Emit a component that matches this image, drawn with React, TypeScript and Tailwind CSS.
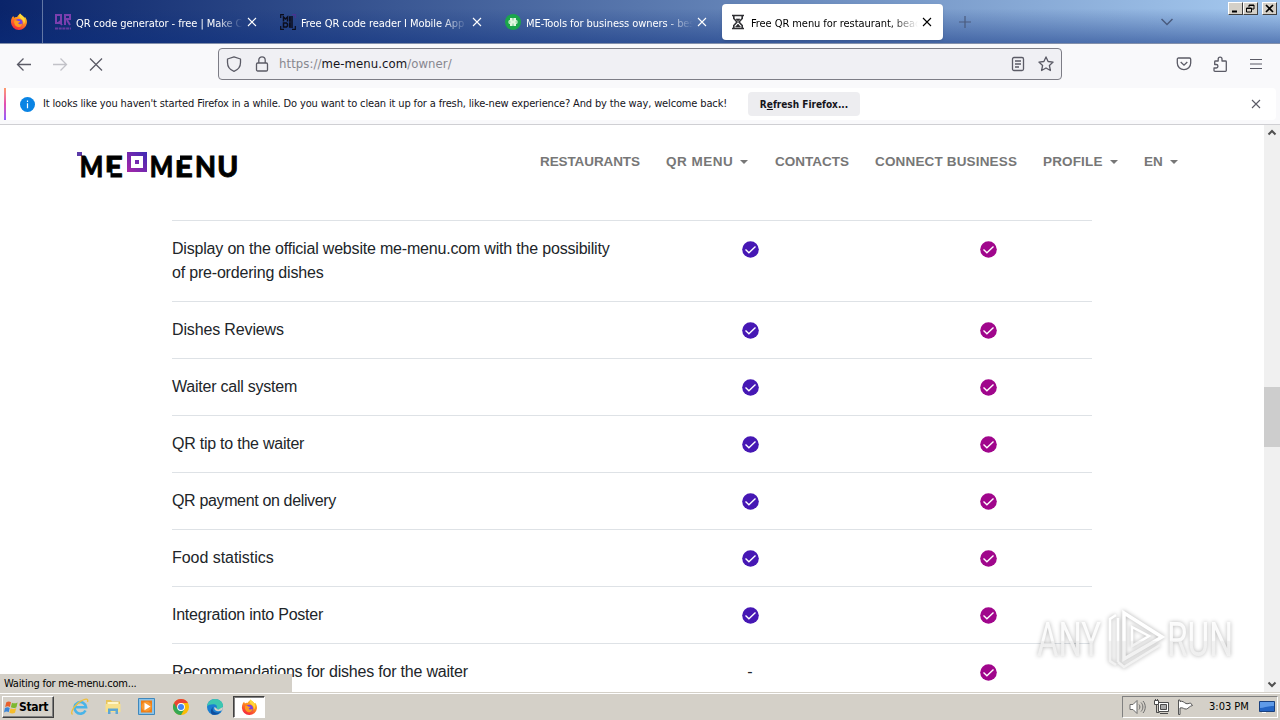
import type { ReactNode } from "react";
import clsx from "clsx";

const tahoma = "font-['DejaVu_Sans_Condensed','DejaVu_Sans',sans-serif] [font-stretch:condensed]";

function FirefoxIcon({ size = 18 }: { size?: number }) {
  return (
    <svg width={size} height={size} viewBox="0 0 18 18">
      <defs>
        <linearGradient id="fx" x1="0.8" y1="0" x2="0.3" y2="1">
          <stop offset="0" stopColor="#ffe226" />
          <stop offset="0.45" stopColor="#ff8a1e" />
          <stop offset="1" stopColor="#f5213f" />
        </linearGradient>
      </defs>
      <path d="M2 4.500 3.200 3l1 1.700C5 4 6.200 3.900 7 4.200 7.600 2.700 9 2 10 .5c1 1.300 3.300 2.400 4.200 4.200l.8-.6c1.400 1.700 2.200 3.600 1.900 6A8 8 0 0 1 1 9.500C.9 7.500 1.200 6 2 4.500Z" fill="url(#fx)" />
      <circle cx="8.800" cy="9.800" r="3.800" fill="#7542e5" />
      <path d="M4.300 7.500c1.600-.7 2.900-.3 3.900.6l2 .1c-.3 1.200-1.700 1.200-2 2 .6 1.400 2.800 1.300 4 .2-.2 2.500-2 3.700-4 3.600-2.900-.2-4.600-3.500-3.900-6.500Z" fill="#ff9a1f" />
      <path d="M10 .5c1 1.300 3.300 2.400 4.200 4.200 1.300 2.600.8 4.900-.6 6.800.3-3.700-1-5-3-6C9.200 4.500 9 2.500 10 .5Z" fill="#ffd83a" />
    </svg>
  );
}

function QrFavicon() {
  return (
    <svg width="16" height="16" viewBox="0 0 16 16" fill="none" stroke="#7b3fae" strokeWidth="2">
      <path d="M1 1h5v8H1zM4 7l3 4M10 11V1h5v4h-5M12 6l3 5" />
      <path d="M0 14.500h16" strokeDasharray="3 .7" strokeOpacity=".8" />
    </svg>
  );
}

function ScanFavicon() {
  return (
    <svg width="16" height="16" viewBox="0 0 16 16" fill="none" stroke="#0b0d1c" strokeWidth="1.200">
      <path d="M.7 4V.7H4M.7 12v3.300H4M12 15.300h3.300V12" />
      <path d="M12 .7h3.300V4" stroke="#4b3291" />
      <path d="M3.500 7.500V3l2 2 2-2v4.500M13 3H9.700v4H13M9.700 5H13M3.500 9h3l1 1v2l-1 1h-3zM13 9H9.700v4H13M9.700 11H13" strokeWidth="1.500" />
    </svg>
  );
}

function CloverFavicon() {
  return (
    <svg width="16" height="16" viewBox="0 0 16 16">
      <circle cx="8" cy="8" r="8" fill="#1aa64b" />
      <path d="M5 4h2.300l.7 1 .7-1H11v2l1.500.7v2.600L11 10v2H8.700L8 11l-.7 1H5v-2l-1.500-.7V6.700L5 6z" fill="#e2f7df" />
      <path d="M8 5v1.500M8 9.500V11M4 8h1.500M10.500 8H12" stroke="#5dbb77" strokeWidth=".8" />
    </svg>
  );
}

function HourglassFavicon() {
  return (
    <svg width="16" height="16" viewBox="0 0 16 16" fill="none" stroke="#2f2f33" strokeWidth="1.600">
      <path d="M2 1.500h12M2 14.500h12M3.800 2v2.500L7 8l-3.200 3.500V14M12.200 2v2.500L9 8l3.200 3.500V14" />
      <path d="M6 5h4L8 7zM5.500 13 8 10l2.500 3z" fill="#2f2f33" strokeWidth=".6" />
    </svg>
  );
}

function Cross({ size, className }: { size: number; className?: string }) {
  return (
    <svg width={size} height={size} viewBox="0 0 10 10" className={className} fill="none" stroke="currentColor" strokeWidth="1.100">
      <path d="m1 1 8 8M9 1 1 9" />
    </svg>
  );
}

const tabs = [
  { title: "QR code generator - free | Make C", icon: <QrFavicon /> },
  { title: "Free QR code reader I Mobile App", icon: <ScanFavicon /> },
  { title: "ME-Tools for business owners - bes", icon: <CloverFavicon /> },
  { title: "Free QR menu for restaurant, beac", icon: <HourglassFavicon />, active: true },
];

function WindowButton({ children }: { children: ReactNode }) {
  return (
    <div className="flex h-[13px] w-[15px] items-center justify-center border border-t-white border-r-[#404040] border-b-[#404040] border-l-white bg-[#d4d0c8] text-black">
      {children}
    </div>
  );
}

function TabBar() {
  return (
    <div className="flex h-[43px] shrink-0 bg-[linear-gradient(to_bottom,transparent_20%,rgba(10,45,125,0.5)),linear-gradient(to_right,#0a246a,#a6caf0)]">
      <div className="flex w-[43px] items-center justify-center border-r border-[#6277a5] pr-1">
        <FirefoxIcon />
      </div>
      <div className="ml-1 flex gap-1 pt-1">
        {tabs.map((tab) => (
          <div
            key={tab.title}
            className={clsx(
              "flex h-9 w-[221px] items-center rounded pl-2",
              tab.active ? "bg-white text-black shadow" : "text-white"
            )}
          >
            {tab.icon}
            <div className={clsx(tahoma, "ml-[5px] w-[167px] overflow-hidden whitespace-nowrap pt-[3px] text-[11px] leading-4 tracking-[-0.07px] [mask-image:linear-gradient(to_right,#000_84%,transparent)]")}>
              {tab.title}
            </div>
            <Cross size={10} className="ml-1" />
          </div>
        ))}
      </div>
      <svg width="12" height="12" viewBox="0 0 12 12" className="mt-4 ml-4 text-[#4a5b7e]" stroke="currentColor" strokeWidth="1.200">
        <path d="M6 0v12M0 6h12" />
      </svg>
      <svg width="12" height="8" viewBox="0 0 12 8" className="mt-[18px] ml-auto" fill="none" stroke="#4a5b7e" strokeWidth="1.500">
        <path d="m.5 1 5.500 5.500L11.500 1" />
      </svg>
      <div className="mt-[2px] mr-[3px] ml-[55px] flex">
        <WindowButton>
          <svg width="9" height="9" viewBox="0 0 9 9"><path d="M1 6.500h5v2H1z" /></svg>
        </WindowButton>
        <WindowButton>
          <svg width="9" height="9" viewBox="0 0 9 9" fill="none" stroke="#000"><path d="M3 3V1h5v4H6M3 1.500h5M.5 4h5v4h-5zM.5 4.500h5" /></svg>
        </WindowButton>
        <div className="ml-1">
          <WindowButton>
            <svg width="9" height="9" viewBox="0 0 9 9" stroke="#000" strokeWidth="1.700"><path d="m1 1 7 7M8 1 1 8" /></svg>
          </WindowButton>
        </div>
      </div>
    </div>
  );
}

function Toolbar() {
  return (
    <div className="flex h-[45px] shrink-0 items-center border-t border-[#8390ab] bg-[#f9f9fb] pb-1 text-[#5b5b66]">
      <svg width="16" height="16" viewBox="0 0 16 16" className="ml-4" fill="none" stroke="currentColor" strokeWidth="1.300">
        <path d="M15 8.500H1.500M7.500 2.500l-6 6 6 6" />
      </svg>
      <svg width="16" height="16" viewBox="0 0 16 16" className="ml-5" fill="none" stroke="#c2c2c8" strokeWidth="1.300">
        <path d="M1 8.500h13.500M8.500 2.500l6 6-6 6" />
      </svg>
      <svg width="14" height="14" viewBox="0 0 14 14" className="ml-[21px]" stroke="currentColor" strokeWidth="1.300">
        <path d="m1 1.500 12 12M13 1.500l-12 12" />
      </svg>
      <div className="ml-[115px] flex h-8 w-[844px] items-center rounded border border-[#7d7d86] bg-[#f0f0f4]">
        <svg width="16" height="16" viewBox="0 0 16 16" className="ml-[7px]" fill="none" stroke="currentColor" strokeWidth="1.300">
          <path d="M8 .8 14.500 3v3.500c0 4-2.500 7.300-6.500 8.800-4-1.500-6.500-4.800-6.500-8.800V3z" strokeLinejoin="round" />
        </svg>
        <svg width="16" height="16" viewBox="0 0 16 16" className="ml-3" fill="none" stroke="currentColor" strokeWidth="1.300">
          <rect x="2.500" y="7" width="11" height="8" rx="1.200" />
          <path d="M4.800 7V4a3.200 3.200 0 0 1 6.400 0v3" />
        </svg>
        <div className={clsx(tahoma, "ml-[9px] text-[13px] leading-4 tracking-[0.07px] text-[#87878f]")}>
          https://<span className="text-[#15141a]">me-menu.com</span>/owner/
        </div>
        <svg width="14" height="16" viewBox="0 0 14 16" className="ml-auto" fill="none" stroke="currentColor" strokeWidth="1.300">
          <rect x="1.500" y="1.500" width="11" height="13" rx="1.500" />
          <path d="M4 5h6M4 8h6M4 11h4" />
        </svg>
        <svg width="16" height="16" viewBox="0 0 16 16" className="mr-[7px] ml-[13px]" fill="none" stroke="currentColor" strokeWidth="1.300" strokeLinejoin="round">
          <path d="m8 .9 2.100 4.600 5 .6-3.700 3.400 1 5L8 12l-4.400 2.500 1-5L.9 6.100l5-.6z" />
        </svg>
      </div>
      <svg width="16" height="16" viewBox="0 0 16 16" className="ml-[114px]" fill="none" stroke="currentColor" strokeWidth="1.300">
        <path d="M2.500 2h11c.7 0 1.200.5 1.200 1.200V7a6.700 6.700 0 0 1-13.400 0V3.200C1.300 2.500 1.800 2 2.500 2Z" />
        <path d="m4.700 6 3.300 3.200L11.300 6" />
      </svg>
      <svg width="16" height="16" viewBox="0 0 16 16" className="ml-5" fill="none" stroke="currentColor" strokeWidth="1.300" strokeLinejoin="round">
        <path d="M3 15.300h10.500c.5 0 .8-.3.800-.8V5.800c0-.5-.3-.8-.8-.8H10V3a1.900 1.900 0 0 0-3.800 0v2H3.500c-.5 0-.8.3-.8.8v2.700h1.500a1.500 1.500 0 0 1 0 3.500H2v2.500c0 .5.500.8 1 .8Z" />
      </svg>
      <svg width="14" height="12" viewBox="0 0 14 12" className="ml-[21px]" stroke="currentColor" strokeWidth="1.200">
        <path d="M1 1.500h12M1 6h12M1 10.500h12" />
      </svg>
    </div>
  );
}

function Notification() {
  return (
    <div className="flex h-[37px] shrink-0 border-b border-[#cfcfd3] bg-[#f9f9fb] pb-1">
      <div className="ml-1 w-[2px] bg-gradient-to-b from-[#ff9a6a] via-[#e34bb0] to-[#9059ff]" />
      <div className="mr-[4px] flex flex-1 items-center rounded-r bg-white">
        <svg width="15" height="15" viewBox="0 0 15 15" className="ml-[14px]">
          <circle cx="7.500" cy="7.500" r="7.500" fill="#0a84e4" />
          <path d="M7.500 6.300v5M7.500 3.500V5" stroke="#fff" strokeWidth="1.200" />
        </svg>
        <div className={clsx(tahoma, "ml-2 w-[705px] whitespace-nowrap text-[11px] leading-4 tracking-[-0.145px] text-[#15141a]")}>
          It looks like you haven't started Firefox in a while. Do you want to clean it up for a fresh, like-new experience? And by the way, welcome back!
        </div>
        <button className={clsx(tahoma, "h-6 w-28 whitespace-nowrap rounded bg-[#ededf0] text-[10px] font-bold text-[#15141a]")}>
          R<span className="underline">e</span>fresh Firefox...
        </button>
        <Cross size={10} className="mr-[15px] ml-auto text-[#5b5b66]" />
      </div>
    </div>
  );
}

const logoLetters = [
  { char: "M", x: 2.700, width: 23.5 },
  { char: "E", x: 27.700, width: 18 },
  { char: "M", x: 72.700, width: 23.5 },
  { char: "E", x: 97.700, width: 18 },
  { char: "N", x: 118, width: 21 },
  { char: "U", x: 140.300, width: 21 },
];

function Logo() {
  return (
    <svg width="164" height="30" viewBox="0 0 164 30" className="font-['Lato',sans-serif] font-black">
      <defs>
        <linearGradient id="brand" x1="1" y1="0" x2="0" y2="1">
          <stop offset="0" stopColor="#3d2bb5" />
          <stop offset="1" stopColor="#a826a8" />
        </linearGradient>
      </defs>
      <path d="M0 2h5v4H0z" fill="#5b3ba8" />
      <g stroke="#000" strokeWidth="0.8" fontSize="28">
        {logoLetters.map((l) => (
          <text key={l.x} x={l.x} y="26.500" textLength={l.width} lengthAdjust="spacingAndGlyphs">
            {l.char}
          </text>
        ))}
      </g>
      <path d="M28 22.500h5.500V28H28zM98 5h5v5h-5z" fill="#fff" />
      <path d="M50 2h20v20H50zM54 6v12h12V6zM58 10h4v4h-4z" fill="url(#brand)" fillRule="evenodd" />
    </svg>
  );
}

const nav = [
  { label: "Restaurants", className: "w-[126px] tracking-[-0.1px]" },
  { label: "QR menu", className: "w-[109px] tracking-[0.48px]", menu: true },
  { label: "Contacts", className: "w-[100px]" },
  { label: "Connect business", className: "w-[168px] tracking-[0.16px]" },
  { label: "Profile", className: "w-[101px] tracking-[0.15px]", menu: true },
  { label: "EN", className: "w-[40px]", menu: true },
];

function SiteHeader() {
  return (
    <header className="flex h-[75px] pt-[25px]">
      <div className="ml-[77px] w-[463px]">
        <Logo />
      </div>
      <nav className="flex text-[13.5px] leading-6 font-bold text-[#777] uppercase">
        {nav.map((item) => (
          <div key={item.label} className={clsx("flex items-center self-start whitespace-nowrap", item.className)}>
            {item.label}
            {item.menu && (
              <svg width="8" height="4" viewBox="0 0 8 4" className="ml-[7px]">
                <path d="M0 0h8L4 4z" fill="#777" />
              </svg>
            )}
          </div>
        ))}
      </nav>
    </header>
  );
}

const features = [
  { name: "Display on the official website me-menu.com with the possibility of pre-ordering dishes", basic: true, tracking: "tracking-[-0.19px]" },
  { name: "Dishes Reviews", basic: true, tracking: "tracking-[-0.14px]" },
  { name: "Waiter call system", basic: true, tracking: "tracking-[-0.23px]" },
  { name: "QR tip to the waiter", basic: true, tracking: "tracking-[-0.24px]" },
  { name: "QR payment on delivery", basic: true, tracking: "tracking-[-0.35px]" },
  { name: "Food statistics", basic: true, tracking: "tracking-[-0.04px]" },
  { name: "Integration into Poster", basic: true, tracking: "tracking-[-0.24px]" },
  { name: "Recommendations for dishes for the waiter", basic: false, tracking: "tracking-[-0.2px]" },
];

function Check({ className }: { className: string }) {
  return (
    <svg width="17" height="17" viewBox="0 0 17 17" className={clsx("mt-1", className)}>
      <circle cx="8.500" cy="8.500" r="8.300" fill="currentColor" />
      <path d="m3.500 8.500 3.400 3.200 6.600-6.200" fill="none" stroke="#fff" strokeWidth="1.400" />
    </svg>
  );
}

function FeatureTable() {
  return (
    <div className="mt-[20px] ml-[172px] w-[920px]">
      {features.map((f) => (
        <div key={f.name} className="grid grid-cols-[459px_238px_1fr] border-t border-[#dee2e6] py-4 leading-6 text-[#212529]">
          <div className={clsx("pr-4 text-base", f.tracking)}>{f.name}</div>
          <div className="flex justify-center">{f.basic ? <Check className="text-[#4617b4]" /> : "-"}</div>
          <div className="flex justify-center pl-[15px]">
            <Check className="text-[#a0068c]" />
          </div>
        </div>
      ))}
    </div>
  );
}

function Scrollbar() {
  return (
    <div className="flex w-4 flex-col items-center bg-[#f0f0f0] py-1 text-[#505050]">
      <svg width="10" height="7" viewBox="0 0 10 7" fill="none" stroke="currentColor" strokeWidth="2"><path d="m1.500 5.500 3.500-3.500 3.500 3.500" /></svg>
      <div className="mt-[251px] h-[60px] w-full bg-[#cdcdcd]" />
      <svg width="10" height="7" viewBox="0 0 10 7" className="mt-auto" fill="none" stroke="currentColor" strokeWidth="2"><path d="m1.500 1.500 3.500 3.500 3.500-3.500" /></svg>
    </div>
  );
}

function Watermark() {
  return (
    <svg width="200" height="66" viewBox="0 0 200 66" className="absolute right-[44px] bottom-[20px] font-['Roboto',sans-serif] [filter:drop-shadow(0_0_2px_rgba(0,0,0,0.32))]">
      <defs>
        <linearGradient id="glass" gradientUnits="userSpaceOnUse" x1="0" y1="0" x2="0" y2="66">
          <stop offset="0.52" stopColor="#fff" />
          <stop offset="0.54" stopColor="#f2f2f2" />
        </linearGradient>
      </defs>
      <g fill="url(#glass)" fillOpacity="0.9" fontSize="48">
        <text x="1" y="50" textLength="64" lengthAdjust="spacingAndGlyphs">ANY</text>
        <text x="131" y="50" textLength="66" lengthAdjust="spacingAndGlyphs">RUN</text>
      </g>
      <g fill="none" stroke="url(#glass)" strokeWidth="3.500">
        <path d="M88 7v46l38-22z" />
        <path d="M80 9l-6 4v42l6 4M82 12v44" strokeWidth="2.500" />
        <path d="M96 21v19l17-10z" strokeWidth="2.500" />
        <path d="M82 56l6 5 36-22" strokeWidth="2.500" />
      </g>
    </svg>
  );
}

function StartFlag() {
  return (
    <svg width="15" height="15" viewBox="0 0 16 15">
      <path d="M2.500 2C4.500.7 6 1 7.500 2L6.300 7C4.800 6 3.200 6 1.200 7z" fill="#e8602c" />
      <path d="M8.500 2.300c1.800 1 3.500 1 6-.2l-1.200 5c-2 1.200-4 1.200-6 .2z" fill="#7db82f" />
      <path d="M1 8c2-1.200 3.600-1 5.100-.1L5 12.500c-1.500-.9-3-.9-5 .2z" fill="#3b86d8" />
      <path d="M7 8.300c1.800 1 3.800 1 6-.1l-1.300 5c-2 1-4 1-6 0z" fill="#f6bd2c" />
    </svg>
  );
}

function InternetExplorerIcon() {
  return (
    <svg width="20" height="18" viewBox="0 0 20 18" fill="none">
      <path d="M15.500 12.500a5.800 5.800 0 1 1 .6-3.200H5" stroke="#49b4e8" strokeWidth="2.600" />
      <path d="M2.500 16.500C-.5 14 6 5 13 2c4-1.600 5.500-.8 4.500 2" stroke="#efbf3b" strokeWidth="1.300" />
    </svg>
  );
}

function ExplorerIcon() {
  return (
    <svg width="18" height="17" viewBox="0 0 18 17">
      <path d="M2 2h5l1 1.500h8V14H2z" fill="#e8c45a" />
      <path d="M3.500 4h11v3h-11z" fill="#fff6c9" />
      <path d="M1.500 6h15v8h-15z" fill="#f7e08c" />
      <path d="M4 16v-5.500h10V16h-2.500v-3h-5v3z" fill="#5ea7d4" />
    </svg>
  );
}

function MediaPlayerIcon() {
  return (
    <svg width="17" height="17" viewBox="0 0 17 17">
      <path d="M.5.500h16v16H.5z" fill="#8cc3e8" stroke="#3f88bd" />
      <path d="M3 2.500h11v12H3z" fill="#f07e15" />
      <circle cx="8.500" cy="8.500" r="5" fill="#f79a34" />
      <path d="M6.500 4.800v7.400l6-3.700z" fill="#fff" />
    </svg>
  );
}

function ChromeIcon() {
  return (
    <svg width="16" height="16" viewBox="0 0 16 16">
      <circle cx="8" cy="8" r="8" fill="#fbbc05" />
      <path d="M1.070 4A8 8 0 0 0 8 16l3.500-6L8 8z" fill="#34a853" />
      <path d="M1.070 4A8 8 0 0 1 14.930 4H8a4 4 0 0 0-3.700 2.700L4 9z" fill="#ea4335" />
      <circle cx="8" cy="8" r="3.900" fill="#fff" />
      <circle cx="8" cy="8" r="3" fill="#4285f4" />
    </svg>
  );
}

function EdgeIcon() {
  return (
    <svg width="16" height="16" viewBox="0 0 16 16">
      <circle cx="8" cy="8" r="8" fill="#1b7fd1" />
      <path d="M0 7.500C.5 3 4 0 8 0c4.500 0 8 3 8 6.500 0 2.500-2 4-4.500 4-1.500 0-2.200-.6-1.900-1.200.8-1.300.3-3.900-2.600-4C4 5.100 1 6 0 7.500Z" fill="#3cc7b0" />
      <path d="M5.500 9.500c0 3 2.500 5.300 8 3.500A8 8 0 0 1 5 15.400c-2-2-1.500-6 1.500-7.500z" fill="#0f4e9e" />
      <path d="M7.500 8c-.8 1.800.5 4 3.500 4.200 2 .1 3.500-.6 4.500-1.200L16 8l-4.500 2.500c-1.500 0-2.200-.6-1.900-1.200z" fill="#d4d0c8" />
    </svg>
  );
}

function Taskbar() {
  return (
    <footer className="flex h-7 shrink-0 items-center border-t border-[#d4d0c8] bg-[#d4d0c8] shadow-[inset_0_1px_0_#fff]">
      <div className={clsx(tahoma, "ml-[2px] mt-px flex h-[22px] w-[52px] items-center border border-t-white border-r-[#404040] border-b-[#404040] border-l-white pl-px text-[12px] font-bold tracking-[-0.3px] text-black shadow-[inset_-1px_-1px_0_#808080]")}>
        <StartFlag />
        Start
      </div>
      <div className="ml-4 flex w-[34px]"><InternetExplorerIcon /></div>
      <div className="flex w-[34px]"><ExplorerIcon /></div>
      <div className="flex w-[35px]"><MediaPlayerIcon /></div>
      <div className="flex w-[34px]"><ChromeIcon /></div>
      <div className="flex w-[25px]"><EdgeIcon /></div>
      <div className="ml-px mt-px flex h-[22px] w-8 items-center justify-center border border-t-[#404040] border-r-white border-b-white border-l-[#404040] bg-white shadow-[inset_1px_1px_0_#808080]">
        <FirefoxIcon size={17} />
      </div>
      <div className="mr-[2px] ml-auto mt-px flex h-[22px] w-[156px] items-center border border-t-[#808080] border-r-white border-b-white border-l-[#808080] pl-[6px]">
        <svg width="17" height="16" viewBox="0 0 17 16" fill="none" stroke="#6b6b6b">
          <path d="M1 5.500h3l4-4v13l-4-4H1z" fill="#fff" />
          <path d="M10 5.500c1.200 1.500 1.200 3.500 0 5M12 3.500c2.500 2.700 2.500 6.300 0 9M14 2c3 3.500 3 8.500 0 12" />
        </svg>
        <svg width="17" height="16" viewBox="0 0 17 16" className="ml-[7px]" fill="none" stroke="#4b4b4b">
          <path d="M5.500 3.500h10v9h-10z" fill="#fff" />
          <path d="M7.500 5.500h6v5h-6z" fill="#a9a9a9" />
          <path d="M7 14.500h8M3.500 6v7.500h3" />
          <path d="M1.500 1.500h4v4h-4zM2.500 0v1.500M4.500 0v1.500" fill="#fff" />
        </svg>
        <svg width="16" height="16" viewBox="0 0 16 16" className="ml-[7px]" fill="#fff" stroke="#555">
          <path d="M1.500 1v14.500h1.500V9c3-1 4 1.500 6.500 1 2-.5 3-3 6-3.500l-2-2.500c-2 .5-3 1-4.500.5C7 3.500 5.500 1.500 3 2.500V1z" />
        </svg>
        <div className={clsx(tahoma, "ml-4 w-[50px] whitespace-nowrap pt-px text-[11px] text-black")}>3:03 PM</div>
        <svg width="16" height="14" viewBox="0 0 16 14">
          <path d="M.5 1.500h15v10H.5z" fill="#2465c4" stroke="#18407e" />
          <path d="M1 2h14v4C9 6 5 8 1 8z" fill="#5f9be8" />
          <path d="M3 12.500h4" stroke="#fff" />
        </svg>
      </div>
    </footer>
  );
}

export default function App() {
  return (
    <div className="flex h-[720px] w-[1280px] flex-col overflow-hidden bg-white font-['Liberation_Sans',Arial,sans-serif]">
      <TabBar />
      <Toolbar />
      <Notification />
      <div className="relative flex h-[567px] shrink-0 overflow-hidden">
        <main className="flex-1 overflow-hidden">
          <SiteHeader />
          <FeatureTable />
        </main>
        <Scrollbar />
        <Watermark />
        <div className={clsx(tahoma, "absolute bottom-0 left-0 h-[18px] w-[292px] bg-[#d4d0c8] pl-1 text-[11px] leading-5 tracking-[-0.22px] text-black")}>
          Waiting for me-menu.com...
        </div>
      </div>
      <Taskbar />
    </div>
  );
}
